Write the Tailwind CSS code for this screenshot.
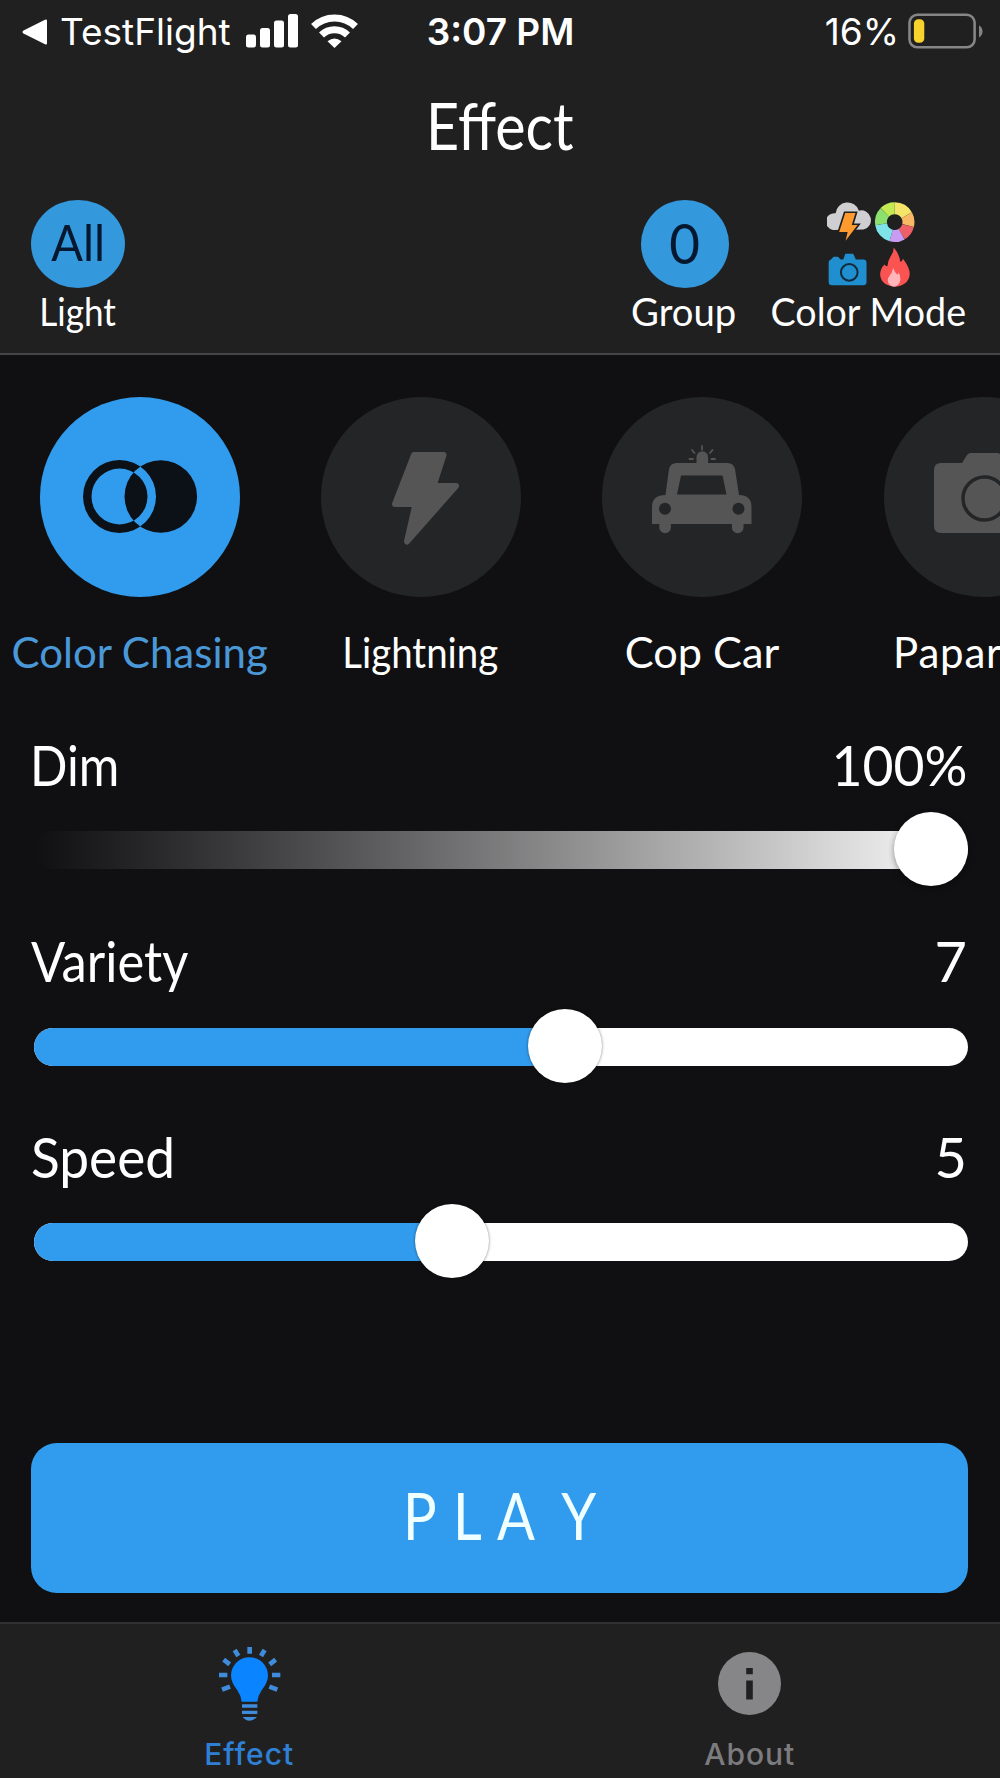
<!DOCTYPE html>
<html lang="en">

<head>
    <meta charset="UTF-8">
    <meta name="viewport" content="width=device-width, initial-scale=1.0">
    <title>Effect</title>
    <script src="https://cdn.jsdelivr.net/npm/@tailwindcss/browser@4"></script>
</head>

<body class="bg-[#101012]">
    <div class="w-[1000px] h-[1778px] flex flex-col overflow-hidden text-white font-['Lato',sans-serif]">
        <header class="h-[355px] shrink-0 bg-[#202021] border-b-2 border-[#454547]">
            <!-- Status bar -->
            <div class="h-[63px] flex items-center font-['Inter',sans-serif] text-[37px] leading-[63px]">
                <div class="flex-1 flex items-center pl-[22px]">
                    <svg class="w-[25px] h-[26px]" viewBox="0 0 25 26" fill="#fff"><path d="M1.500 11.500 23 .8q2-.8 2 1v22.400q0 1.800-2 1L1.500 14.500q-2-1.500 0-3z"/></svg>
                    <span class="ml-[13px]">TestFlight</span>
                    <svg class="ml-[15px] -mt-[2px] w-[52px] h-[34px]" viewBox="0 0 52 34" fill="#fff">
                        <rect x="0" y="20.500" width="10" height="13" rx="2.500"/>
                        <rect x="14" y="14" width="10" height="19.500" rx="2.500"/>
                        <rect x="28" y="6.500" width="10" height="27" rx="2.500"/>
                        <rect x="42" y="0" width="10" height="33.500" rx="2.500"/>
                    </svg>
                    <svg class="ml-[13px] -mt-[2px] w-[47px] h-[34px]" viewBox="0 0 47 34" fill="none" stroke="#fff" stroke-width="7">
                        <path d="M2.500 12.500a30 30 0 0 1 42 0"/>
                        <path d="M10.500 21a18.500 18.500 0 0 1 26 0"/>
                        <path d="M16.500 27.200q7-5.400 14 0L23.500 34z" fill="#fff" stroke="none"/>
                    </svg>
                </div>
                <span class="-ml-[4px] font-semibold">3:07 PM</span>
                <div class="flex-1 flex items-center justify-end pr-[17px]">
                    <span>16%</span>
                    <svg class="ml-[9px] -mt-px w-[75px] h-[37px]" viewBox="0 0 76 37">
                        <rect x="1.500" y="1.500" width="66" height="33" rx="8" fill="none" stroke="#868687" stroke-width="2.600"/>
                        <rect x="6" y="6" width="10.500" height="24" rx="4.500" fill="#f8d22d"/>
                        <path d="M72 12.500q3.500 2 3.500 6t-3.500 6z" fill="#868687"/>
                    </svg>
                </div>
            </div>

            <h1 class="h-[123px] leading-[124px] text-center text-[66px]"><span class="inline-block scale-x-[.87]">Effect</span></h1>

            <div class="flex pt-[14px] pl-[31px] pr-[34px] text-[39px] leading-[46px] whitespace-nowrap">
                <div class="w-[94px] flex flex-col items-center">
                    <div class="w-[94px] h-[88px] rounded-[50%] bg-[#3498dd] text-[#06182f] text-[51px] leading-[84px] text-center"><span class="inline-block scale-x-[.92]">All</span></div>
                    <span class="scale-x-[.9]">Light</span>
                </div>
                <div class="ml-auto w-[104px] flex flex-col items-center">
                    <div class="ml-[2px] w-[88px] h-[88px] rounded-full bg-[#3498dd] text-[#06182f] text-[57px] leading-[84px] text-center"><span class="inline-block scale-x-[.93]">0</span></div>
                    <span class="scale-x-[.98]">Group</span>
                </div>
                <div class="ml-[34px] w-[196px] flex flex-col items-center">
                    <svg class="ml-[6px] w-[88px] h-[88px]" viewBox="622 58 265 265">
                        <!-- storm cloud -->
                        <path d="M640 148a25 25 0 0 1 8-50 36 36 0 0 1 70-8 29 29 0 0 1 14 57z" fill="#cfcfd1"/>
                        <path d="M675 95h36l-11 36h19l-46 60 8-34h-26z" fill="#ff9a2e" stroke="#202021" stroke-width="5"/>
                        <!-- color wheel -->
                        <g fill="none" stroke-width="36">
                            <path d="M826 83a42 42 0 0 1 36 21" stroke="#f4e56a"/>
                            <path d="M862 104a42 42 0 0 1 4 31" stroke="#f9b964"/>
                            <path d="M866 135a42 42 0 0 1-19 26" stroke="#ee5f68"/>
                            <path d="M847 161a42 42 0 0 1-32 4" stroke="#c79cf2"/>
                            <path d="M815 165a42 42 0 0 1-30-34" stroke="#7fe3ea"/>
                            <path d="M785 131a42 42 0 0 1 11-36" stroke="#8be070"/>
                            <path d="M796 95a42 42 0 0 1 30-12" stroke="#c3ea55"/>
                        </g>
                        <!-- camera -->
                        <path d="M627 246q0-8 7-9l8-8h13l8 8h8l6-17h24l8 17h22q10 0 10 10v58q0 10-10 10h-94q-10 0-10-10z" fill="#1f8fd0"/>
                        <circle cx="689" cy="276" r="25" fill="none" stroke="#14293a" stroke-width="6"/>
                        <!-- flame -->
                        <path d="M823 201q17 20 20 44 6-3 8-10 21 28 20 47-3 32-44 37-42-3-45-36 0-18 13-31 4 6 9 5 2-17 10-30 9-11 9-26z" fill="#fb5252"/>
                        <path d="M821 262q5 14 12 20 4-2 5-6 6 12 5 22-4 19-19 21-18-2-19-19 0-9 6-15 9-11 10-23z" fill="#ffb5b9"/>
                    </svg>
                    <span class="scale-x-[.965]">Color Mode</span>
                </div>
            </div>
        </header>

        <main class="flex-1 flex flex-col">
            <!-- Effect picker, scrolls sideways -->
            <div class="-ml-px pt-[42px] flex overflow-hidden text-[42px] leading-[60px] whitespace-nowrap">
                <div class="w-[281.3px] shrink-0 flex flex-col items-center">
                    <svg class="w-[200px] h-[200px] rounded-full bg-[#319cee]" viewBox="39.500 397 200 200">
                        <path fill="#0c1118" fill-rule="evenodd" d="M82.500 496.500a36.500 36.500 0 0 1 73 0a36.500 36.500 0 0 1-73 0zM91 496.500a28 28 0 0 0 56 0a28 28 0 0 0-56 0zM124 496.500a36.300 36.300 0 0 1 72.600 0a36.300 36.300 0 0 1-72.600 0z"/>
                    </svg>
                    <span class="mt-[25px] text-[#4a98d8]">Color Chasing</span>
                </div>
                <div class="w-[281.3px] shrink-0 flex flex-col items-center">
                    <svg class="w-[200px] h-[200px] rounded-full bg-[#242527]" viewBox="321 397 200 200">
                        <path fill="#555" stroke="#555" stroke-width="6" stroke-linejoin="round" d="M414 455h29.500l-10 31H456L407 541.500l8.500-37.500H395z"/>
                    </svg>
                    <span class="mt-[25px] -ml-px scale-x-[.915]">Lightning</span>
                </div>
                <div class="w-[281.3px] shrink-0 flex flex-col items-center">
                    <svg class="w-[200px] h-[200px] rounded-full bg-[#242527]" viewBox="602.500 397 200 200">
                        <g stroke="#555" stroke-width="1.800" stroke-linecap="round">
                            <path d="M702.500 446v3.500M692.500 450l2.500 3M713 450l-2.500 3M690 459h3.500M712 459h3.500"/>
                        </g>
                        <path fill="#555" d="M697 464v-7a5.800 5.800 0 0 1 11.600 0v7z"/>
                        <path fill="#555" fill-rule="evenodd" d="M677 463h51q6 0 7.500 6l4 26q12.500 0 12.500 12v17h-8v3.500a5.800 5.800 0 0 1-11.600 0V524h-61v3.500a5.800 5.800 0 0 1-11.600 0V524h-7.300v-17q0-12 13.500-12l3.500-26q1.500-6 7.500-6zM681.500 475.500l-4 19h49.500l-4-19z"/>
                        <circle cx="665.500" cy="508.700" r="6" fill="#242527"/>
                        <circle cx="739" cy="508.700" r="6" fill="#242527"/>
                    </svg>
                    <span class="mt-[25px] -ml-px scale-x-[1.03]">Cop Car</span>
                </div>
                <div class="w-[281.3px] shrink-0 flex flex-col items-center">
                    <svg class="w-[200px] h-[200px] rounded-full bg-[#242527]" viewBox="884 397 200 200">
                        <path fill="#555" d="M941 463h21l5-8q1.500-2 4-2h26q2.500 0 4 2l5 8h21q7 0 7 7v56q0 7-7 7h-86q-7 0-7-7v-56q0-7 7-7z"/>
                        <circle cx="984.500" cy="498.500" r="21.500" fill="none" stroke="#242527" stroke-width="3.500"/>
                    </svg>
                    <span class="mt-[25px] tracking-[.8px]">Paparazzi</span>
                </div>
            </div>

            <!-- Sliders -->
            <div class="mt-[47px] flex flex-col gap-[37px]">
                <div>
                    <div class="flex justify-between pl-[30px] pr-[33px] text-[56px] leading-[72px]">
                        <span class="origin-left scale-x-[.88]">Dim</span>
                        <span class="origin-right scale-x-[.955]">100%</span>
                    </div>
                    <div class="relative mt-[11px] ml-[34px] mr-[32px] h-[75px] flex items-center">
                        <div class="w-full h-[38px] rounded-full bg-linear-to-r from-[#101012] to-white"></div>
                        <div class="absolute right-0 top-0 size-[74px] rounded-full bg-white shadow-[0_2px_6px_rgba(0,0,0,0.4)]"></div>
                    </div>
                </div>
                <div>
                    <div class="flex justify-between pl-[31px] pr-[33px] text-[56px] leading-[74px]">
                        <span class="origin-left scale-x-[.905]">Variety</span>
                        <span>7</span>
                    </div>
                    <div class="relative mt-[11px] ml-[34px] mr-[32px] h-[75px] flex items-center">
                        <div class="w-full h-[38px] rounded-full bg-white overflow-hidden">
                            <div class="w-[530px] h-full bg-[#319cee]"></div>
                        </div>
                        <div class="absolute left-[494px] top-0 size-[74px] rounded-full bg-white shadow-[0_0_3px_rgba(0,0,0,0.5)]"></div>
                    </div>
                </div>
                <div>
                    <div class="flex justify-between pl-[31px] pr-[33px] text-[56px] leading-[72px]">
                        <span class="origin-left scale-x-[.95]">Speed</span>
                        <span>5</span>
                    </div>
                    <div class="relative mt-[11px] ml-[34px] mr-[32px] h-[75px] flex items-center">
                        <div class="w-full h-[38px] rounded-full bg-white overflow-hidden">
                            <div class="w-[418px] h-full bg-[#319cee]"></div>
                        </div>
                        <div class="absolute left-[381px] top-0 size-[74px] rounded-full bg-white shadow-[0_0_3px_rgba(0,0,0,0.5)]"></div>
                    </div>
                </div>
            </div>

            <button class="mt-auto ml-[31px] mr-[32px] mb-[29px] h-[150px] pb-[7px] rounded-[26px] bg-[#319cee] text-[#f0ffff] text-[66px] flex items-center justify-center">
                <span class="scale-x-[.85] whitespace-nowrap"><span class="tracking-[19px]">P</span><span class="tracking-[18px]">L</span><span class="tracking-[31px]">A</span>Y</span>
            </button>
        </main>

        <!-- Tab bar -->
        <nav class="h-[156px] -ml-px shrink-0 flex bg-[#202021] border-t-2 border-[#303032] font-['Inter',sans-serif] font-medium text-[30px] leading-[40px] tracking-[1px]">
            <a class="flex-1 flex flex-col items-center text-[#2f80d4]">
                <svg class="mt-[22px] w-[63px] h-[76px]" viewBox="204 108 189 228">
                    <path fill="#0a84ff" d="M275 275q-2-18-13-34-19-25-19-44a55.500 55.500 0 0 1 111 0q0 19-19 44-11 16-13 34z"/>
                    <g fill="none" stroke="#3f8bdc" stroke-width="14">
                        <path d="M299 111v20M254 120l11 18M344 120l-11 18M221 149l18 14M377 149l-18 14M207 195h25M366 195h25M216 239l24-9M382 239l-24-9"/>
                    </g>
                    <path fill="#3f8bdc" d="M276 283h46v10h-46zM276 302h46v10h-46zM278 321h42q-8 11-21 11t-21-11z"/>
                </svg>
                <span class="mt-[12px]">Effect</span>
            </a>
            <a class="flex-1 flex flex-col items-center text-[#7c7c7e]">
                <svg class="mt-[28px] w-[63px] h-[63px]" viewBox="0 0 63 63">
                    <circle cx="31.500" cy="31.500" r="31.500" fill="#868688"/>
                    <path fill="#202021" d="M28.200 16h6.600v6.300h-6.600zM28.200 28.500h6.600v19h-6.600z"/>
                </svg>
                <span class="mt-[19px]">About</span>
            </a>
        </nav>
    </div>
</body>

</html>
